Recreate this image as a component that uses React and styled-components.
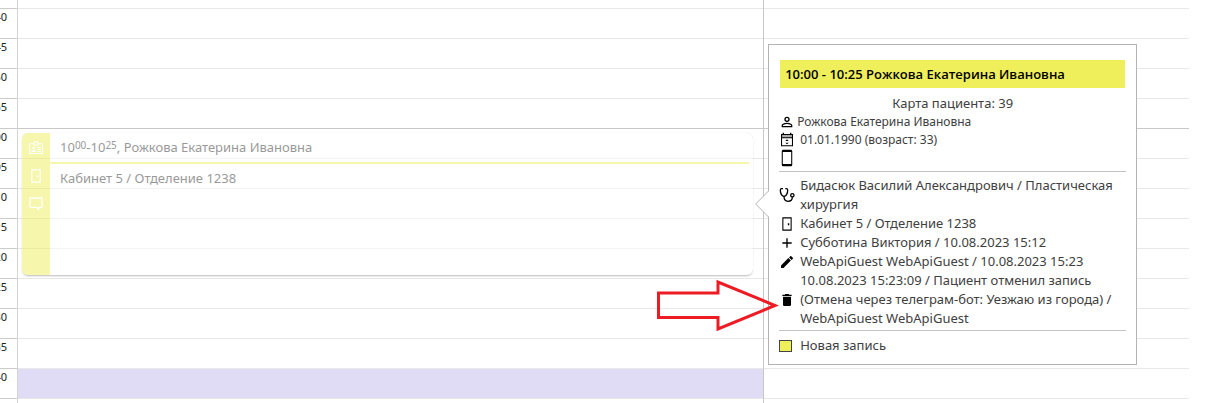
import React from "react";
import styled, { createGlobalStyle } from "styled-components";

const icons = {
	account:
		"M12,4A4,4 0 0,1 16,8A4,4 0 0,1 12,12A4,4 0 0,1 8,8A4,4 0 0,1 12,4M12,6A2,2 0 0,0 10,8A2,2 0 0,0 12,10A2,2 0 0,0 14,8A2,2 0 0,0 12,6M12,13C14.67,13 20,14.33 20,17V20H4V17C4,14.33 9.33,13 12,13M12,14.9C9.03,14.9 5.9,16.36 5.9,17V18.1H18.1V17C18.1,16.36 14.97,14.9 12,14.9Z",
	phone:
		"M17,1H7C5.89,1 5,1.89 5,3V21A2,2 0 0,0 7,23H17A2,2 0 0,0 19,21V3C19,1.89 18.1,1 17,1M17.6,20H6.4V4H17.6V20Z",
	door: "M5,2H19V22H5V2M6.6,3.6V20.4H17.4V3.6H6.6M13.2,11H15.4V14H13.2V11Z",
	plus: "M19,13H13V19H11V13H5V11H11V5H13V11H19V13Z",
	pencil:
		"M20.71,7.04C21.1,6.65 21.1,6 20.71,5.63L18.37,3.29C18,2.9 17.35,2.9 16.96,3.29L15.12,5.12L18.87,8.87M3,17.25V21H6.75L17.81,9.93L14.06,6.18L3,17.25Z",
	trash:
		"M19,4H15.5L14.5,3H9.5L8.5,4H5V6H19M6,19A2,2 0 0,0 8,21H16A2,2 0 0,0 18,19V7H6V19Z",
	message:
		"M20,2H4A2,2 0 0,0 2,4V16A2,2 0 0,0 4,18H12L17,22V18H20A2,2 0 0,0 22,16V4A2,2 0 0,0 20,2M20,16H15V18L12.7,16H4V4H20V16Z",
	badge:
		"M8.500,2H15.500V5H21A1.500,1.500 0 0,1 22.500,6.500V19.500A1.500,1.500 0 0,1 21,21H3A1.500,1.500 0 0,1 1.500,19.500V6.500A1.500,1.500 0 0,1 3,5H8.500V2M10,3.500V7H14V3.500H10M3,6.500V19.500H21V6.500H15.500V8.500H8.500V6.500H3M14,10.500H19.500V12H14V10.500M14,13.500H19.500V15H14V13.500M14,16.500H19.500V18H14V16.500M8.500,10A2,2 0 0,1 10.500,12A2,2 0 0,1 8.500,14A2,2 0 0,1 6.500,12A2,2 0 0,1 8.500,10M4.500,18C4.500,16 6.500,15 8.500,15C10.500,15 12.500,16 12.500,18H4.500Z",
};

const Icon = ({ name, size = 16 }) => (
	<svg width={size} height={size} viewBox="0 0 24 24" fill="currentColor" aria-hidden="true">
		<path d={icons[name]} fillRule="evenodd" />
	</svg>
);

const StethoscopeIcon = () => (
	<svg
		width="16"
		height="16"
		viewBox="0 0 24 24"
		fill="none"
		stroke="currentColor"
		strokeWidth="2"
		aria-hidden="true"
	>
		<path d="M6,2.500H4C2.500,2.500 2,3.500 2,5C2,10 4.500,14 7.500,14C10.500,14 13,10 13,5C13,3.500 12.500,2.500 11,2.500H9.500" />
		<path d="M7.500,14C7.500,18.500 9.500,21.500 13.500,21.500C17.500,21.500 20,19 20,15.500" />
		<circle cx="20" cy="12.500" r="2.500" />
	</svg>
);

const CalendarIcon = () => (
	<svg width="16" height="16" viewBox="0 0 24 24" aria-hidden="true">
		<path d="M4,4H20V9H4Z" fill="#aaa" />
		<path
			d="M5.5,1H7.5V3H16.5V1H18.5V3H21V21.5H3V3H5.5V1M4.6,9.5V19.9H19.4V9.5H4.6M4.6,4.5V8H19.4V4.5H4.6M12,11L14.5,13.5H9.5L12,11M9.5,16H14.5L12,18.5L9.5,16Z"
			fill="#000"
			fillRule="evenodd"
		/>
	</svg>
);

const minutes = ["40", "45", "50", "55", "00", "05", "10", "15", "20", "25", "30", "35", "40", "45"];

const Slots = ({ children, marked }) => (
	<DayColumn>
		<Lead />
		{minutes.map((minute, i) => (
			<Slot key={i} $hour={minute === "00"} $marked={marked === i} />
		))}
		{children}
	</DayColumn>
);

const Appointment = () => (
	<Card>
		<CardStrip>
			<Icon name="badge" />
			<Icon name="door" />
			<Icon name="message" />
		</CardStrip>
		<CardBody>
			<CardTitle>
				10<sup>00</sup>-10<sup>25</sup>, Рожкова Екатерина Ивановна
			</CardTitle>
			<CardText>Кабинет 5 / Отделение 1238</CardText>
		</CardBody>
	</Card>
);

const Details = () => (
	<Popover>
		<Pointer width="14" height="28" viewBox="0 0 14 28" aria-hidden="true">
			<path d="M14,0.5L0.7,14L14,27.5" fill="#fff" stroke="#b4b4b4" />
		</Pointer>
		<Heading>10:00 - 10:25 Рожкова Екатерина Ивановна</Heading>
		<CardNumber>Карта пациента: 39</CardNumber>
		<Patient>
			<PatientRow $gap={2}>
				<IconBox>
					<Icon name="account" />
				</IconBox>
				Рожкова Екатерина Ивановна
			</PatientRow>
			<PatientRow $gap={5}>
				<IconBox>
					<CalendarIcon />
				</IconBox>
				01.01.1990 (возраст: 33)
			</PatientRow>
			<PatientRow $gap={5}>
				<IconBox>
					<Icon name="phone" size={18} />
				</IconBox>
			</PatientRow>
		</Patient>
		<Visit>
			<Row>
				<IconBox>
					<StethoscopeIcon />
				</IconBox>
				<span>Бидасюк Василий Александрович / Пластическая хирургия</span>
			</Row>
			<Row>
				<IconBox>
					<Icon name="door" />
				</IconBox>
				<span>Кабинет 5 / Отделение 1238</span>
			</Row>
			<Row>
				<IconBox>
					<Icon name="plus" />
				</IconBox>
				<span>Субботина Виктория / 10.08.2023 15:12</span>
			</Row>
			<Row>
				<IconBox>
					<Icon name="pencil" />
				</IconBox>
				<span>WebApiGuest WebApiGuest / 10.08.2023 15:23</span>
			</Row>
			<Row>
				<IconBox>
					<Icon name="trash" />
				</IconBox>
				<span>
					10.08.2023 15:23:09 / Пациент отменил запись
					<br />
					(Отмена через телеграм-бот: Уезжаю из города) /<br />
					WebApiGuest WebApiGuest
				</span>
			</Row>
		</Visit>
		<Status>
			<Swatch />
			Новая запись
		</Status>
		<Arrow width="124" height="52" viewBox="0 0 124 52" aria-hidden="true">
			<path
				d="M2.5,14H62V3L119,26.5L62,50V38.5H2.5Z"
				fill="none"
				stroke="#ed1c24"
				strokeWidth="3"
			/>
		</Arrow>
	</Popover>
);

export const App = () => {
	return (
		<>
			<GlobalStyle />
			<Schedule>
				<Gutter>
					<Lead />
					{minutes.map((minute, i) => (
						<Time key={i}>{minute}</Time>
					))}
				</Gutter>
				<Slots marked={12}>
					<Appointment />
				</Slots>
				<Slots>
					<Details />
				</Slots>
			</Schedule>
		</>
	);
};

export default App;

const GlobalStyle = createGlobalStyle`
	* {
		box-sizing: border-box;
	}

	body {
		margin: 0;
		background-color: #fff;
		color: #404040;
		font-family: "Noto Sans", "Open Sans", sans-serif;
		font-size: 13px;
	}

	svg {
		display: block;
		flex-shrink: 0;
	}
`;

const Schedule = styled.main`
	display: grid;
	grid-template-columns: 18px 7fr 4fr;
	height: 100vh;
	padding-right: 23px;
	overflow: hidden;
`;

const Gutter = styled.div`
	border-right: 1px solid #d4d4d4;
	overflow: hidden;
`;

const Lead = styled.div`
	height: 8px;
`;

const Time = styled.div`
	display: flex;
	justify-content: flex-end;
	height: 30px;
	padding-right: 10px;
	border-top: 1px solid #ccc;
	color: #222;
	font-size: 11px;
	line-height: 16px;
`;

const DayColumn = styled.section`
	position: relative;
	min-width: 0;

	& + & {
		border-left: 1px solid #c8c8c8;
	}
`;

const Slot = styled.div`
	height: 30px;
	border-top: 1px solid ${({ $hour }) => ($hour ? "#c8c8c8" : "#e8e8e8")};
	background-color: ${({ $marked }) => ($marked ? "#e0dcf6" : "transparent")};
`;

const Card = styled.article`
	position: absolute;
	top: 133px;
	left: 4px;
	right: 10px;
	display: flex;
	height: 142px;
	border-radius: 6px;
	background-color: #fff;
	box-shadow: 0 2px 2px -1px rgba(0, 0, 0, 0.5), 0 0 1px rgba(0, 0, 0, 0.3);
	opacity: 0.5;
	overflow: hidden;
`;

const CardStrip = styled.div`
	display: flex;
	flex-direction: column;
	align-items: center;
	gap: 12px;
	width: 28px;
	padding-top: 7px;
	background-color: #efef5c;
	color: #fff;
`;

const CardBody = styled.div`
	flex: 1;
	padding-right: 4px;
	color: #333;
	line-height: 29px;
`;

const CardTitle = styled.div`
	height: 31px;
	padding-left: 10px;
	border-bottom: 2px solid #efef5c;

	sup {
		font-size: 10px;
		line-height: 0;
		vertical-align: 3px;
	}
`;

const CardText = styled.div`
	padding-left: 10px;
`;

const Popover = styled.aside`
	position: absolute;
	top: 44px;
	left: 4px;
	width: 369px;
	padding: 15px 10px 9px;
	border: 1px solid #b4b4b4;
	background-color: #fff;
	line-height: 19px;
`;

const Pointer = styled.svg`
	position: absolute;
	top: 145px;
	left: -14px;
`;

const Heading = styled.h3`
	margin: 0 1px;
	padding: 0 5px;
	background-color: #efef5c;
	color: #000;
	font-family: "Open Sans", "Noto Sans", sans-serif;
	font-size: 13px;
	font-weight: 600;
	line-height: 28px;
`;

const CardNumber = styled.div`
	margin-top: 6px;
	text-align: center;
`;

const Patient = styled.div`
	padding-bottom: 4px;
	border-bottom: 1px solid #c4c4c4;
	font-size: 12px;
`;

const PatientRow = styled.div`
	display: flex;
	align-items: center;
	gap: ${({ $gap }) => $gap}px;
	min-height: 18px;
	line-height: 18px;
`;

const IconBox = styled.span`
	display: flex;
	flex-shrink: 0;
	justify-content: center;
	width: 16px;
	color: #000;
`;

const Visit = styled.div`
	padding: 4px 0 2px;
	border-bottom: 1px solid #c4c4c4;
`;

const Row = styled.div`
	display: flex;
	align-items: center;
	gap: 5px;
`;

const Status = styled.div`
	display: flex;
	align-items: center;
	gap: 8px;
	padding-top: 5px;
`;

const Swatch = styled.span`
	width: 13px;
	height: 12px;
	border: 1px solid #444;
	background-color: #efef5c;
`;

const Arrow = styled.svg`
	position: absolute;
	top: 234px;
	left: -113px;
`;
